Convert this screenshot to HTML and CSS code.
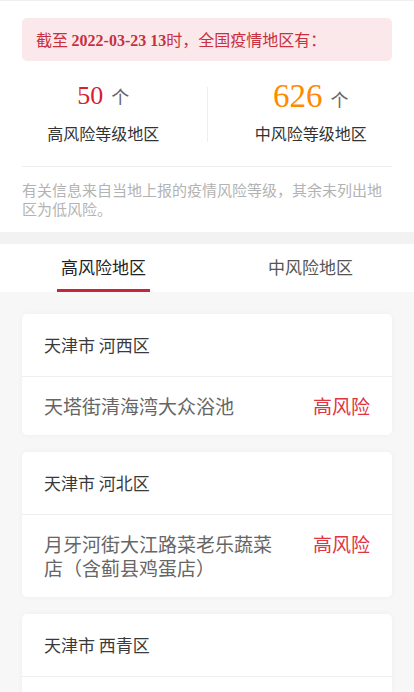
FILE: index.html
```html
<!DOCTYPE html>
<html lang="zh-CN">
<head>
<meta charset="utf-8">
<meta name="viewport" content="width=device-width, initial-scale=1">
<title>疫情风险等级</title>
<link rel="stylesheet" href="styles.css">
</head>
<body>
<div class="top">
  <div class="notice">截至 <b class="date">2022-03-23 13</b>时，全国疫情地区有：</div>
  <div class="stats">
    <div class="stat">
      <div class="num-line"><span class="num high">50</span><span class="unit">个</span></div>
      <div class="label">高风险等级地区</div>
    </div>
    <div class="stat stat-right">
      <div class="num-line"><span class="num mid">626</span><span class="unit">个</span></div>
      <div class="label">中风险等级地区</div>
    </div>
  </div>
  <div class="foot">有关信息来自当地上报的疫情风险等级，其余未列出地区为低风险。</div>
</div>
<div class="tabs">
  <div class="tab active"><span>高风险地区</span></div>
  <div class="tab"><span>中风险地区</span></div>
</div>
<div class="list">
  <div class="card">
    <div class="card-head">天津市 河西区</div>
    <div class="card-row"><div class="place">天塔街清海湾大众浴池</div><div class="level">高风险</div></div>
  </div>
  <div class="card">
    <div class="card-head">天津市 河北区</div>
    <div class="card-row"><div class="place">月牙河街大江路菜老乐蔬菜店（含蓟县鸡蛋店）</div><div class="level">高风险</div></div>
  </div>
  <div class="card">
    <div class="card-head">天津市 西青区</div>
    <div class="card-row card-row-empty"></div>
  </div>
</div>
</body>
</html>
```

FILE: styles.css
```css
* { box-sizing: border-box; }
html, body { margin: 0; padding: 0; }
body {
  background: #f7f7f7;
  font-family: "Noto Sans CJK SC", "Noto Sans", sans-serif;
  border-top: 1px solid #eeeeee;
}
.top {
  background: #fff;
  padding-top: 17px;
}
.notice {
  margin: 0 22px;
  height: 43px;
  line-height: 43px;
  padding: 0 14px;
  background: #fae8ea;
  border-radius: 5px;
  color: #c9303f;
  font-size: 16px;
}
.date {
  font-family: "Liberation Serif", "Noto Sans CJK SC", serif;
  font-weight: bold;
  font-size: 16px;
}
.stats {
  display: flex;
  margin-top: 26px;
  margin-bottom: 24px;
}
.stat {
  flex: 1;
  height: 55px;
  text-align: center;
}
.stat-right { border-left: 1px solid #eeeeee; }
.num-line {
  height: 36px;
  line-height: 36px;
  margin-top: -9px;
  display: flex;
  justify-content: center;
  align-items: baseline;
}
.num {
  font-family: "Liberation Serif", serif;
}
.num.high { color: #d9202f; font-size: 26px; }
.num.mid { color: #ff8a00; font-size: 33px; }
.unit {
  margin-left: 8px;
  font-size: 18px;
  color: #666;
}
.label {
  margin-top: 9px;
  line-height: 20px;
  font-size: 16px;
  color: #333;
}
.foot {
  margin: 0 22px;
  border-top: 1px solid #eeeeee;
  padding: 13px 0 14px;
  font-size: 15px;
  line-height: 19px;
  color: #b3b3b3;
}
.tabs {
  display: flex;
  background: #fff;
  border-top: 12px solid #f2f2f2;
  height: 60px;
}
.tab {
  flex: 1;
  display: flex;
  justify-content: center;
}
.tab span {
  display: block;
  width: 93px;
  text-align: center;
  font-size: 17px;
  line-height: 45px;
  height: 48px;
  color: #555;
}
.tab.active span {
  color: #222;
  border-bottom: 3px solid #c4273a;
}
.list {
  padding: 22px 22px 20px;
  display: flex;
  flex-direction: column;
  gap: 17px;
}
.card {
  background: #fff;
  border-radius: 5px;
  box-shadow: 0 0 6px rgba(0, 0, 0, 0.04);
}
.card-head {
  height: 63px;
  line-height: 62px;
  padding: 0 22px;
  font-size: 17px;
  color: #3a3a3a;
  border-bottom: 1px solid #eeeeee;
}
.card-row {
  display: flex;
  justify-content: space-between;
  align-items: flex-start;
  padding: 17px 22px;
  font-size: 19px;
  line-height: 24px;
}
.card-row-empty { height: 58px; }
.place {
  width: 236px;
  color: #666;
}
.level {
  color: #e0343f;
  white-space: nowrap;
}
```
